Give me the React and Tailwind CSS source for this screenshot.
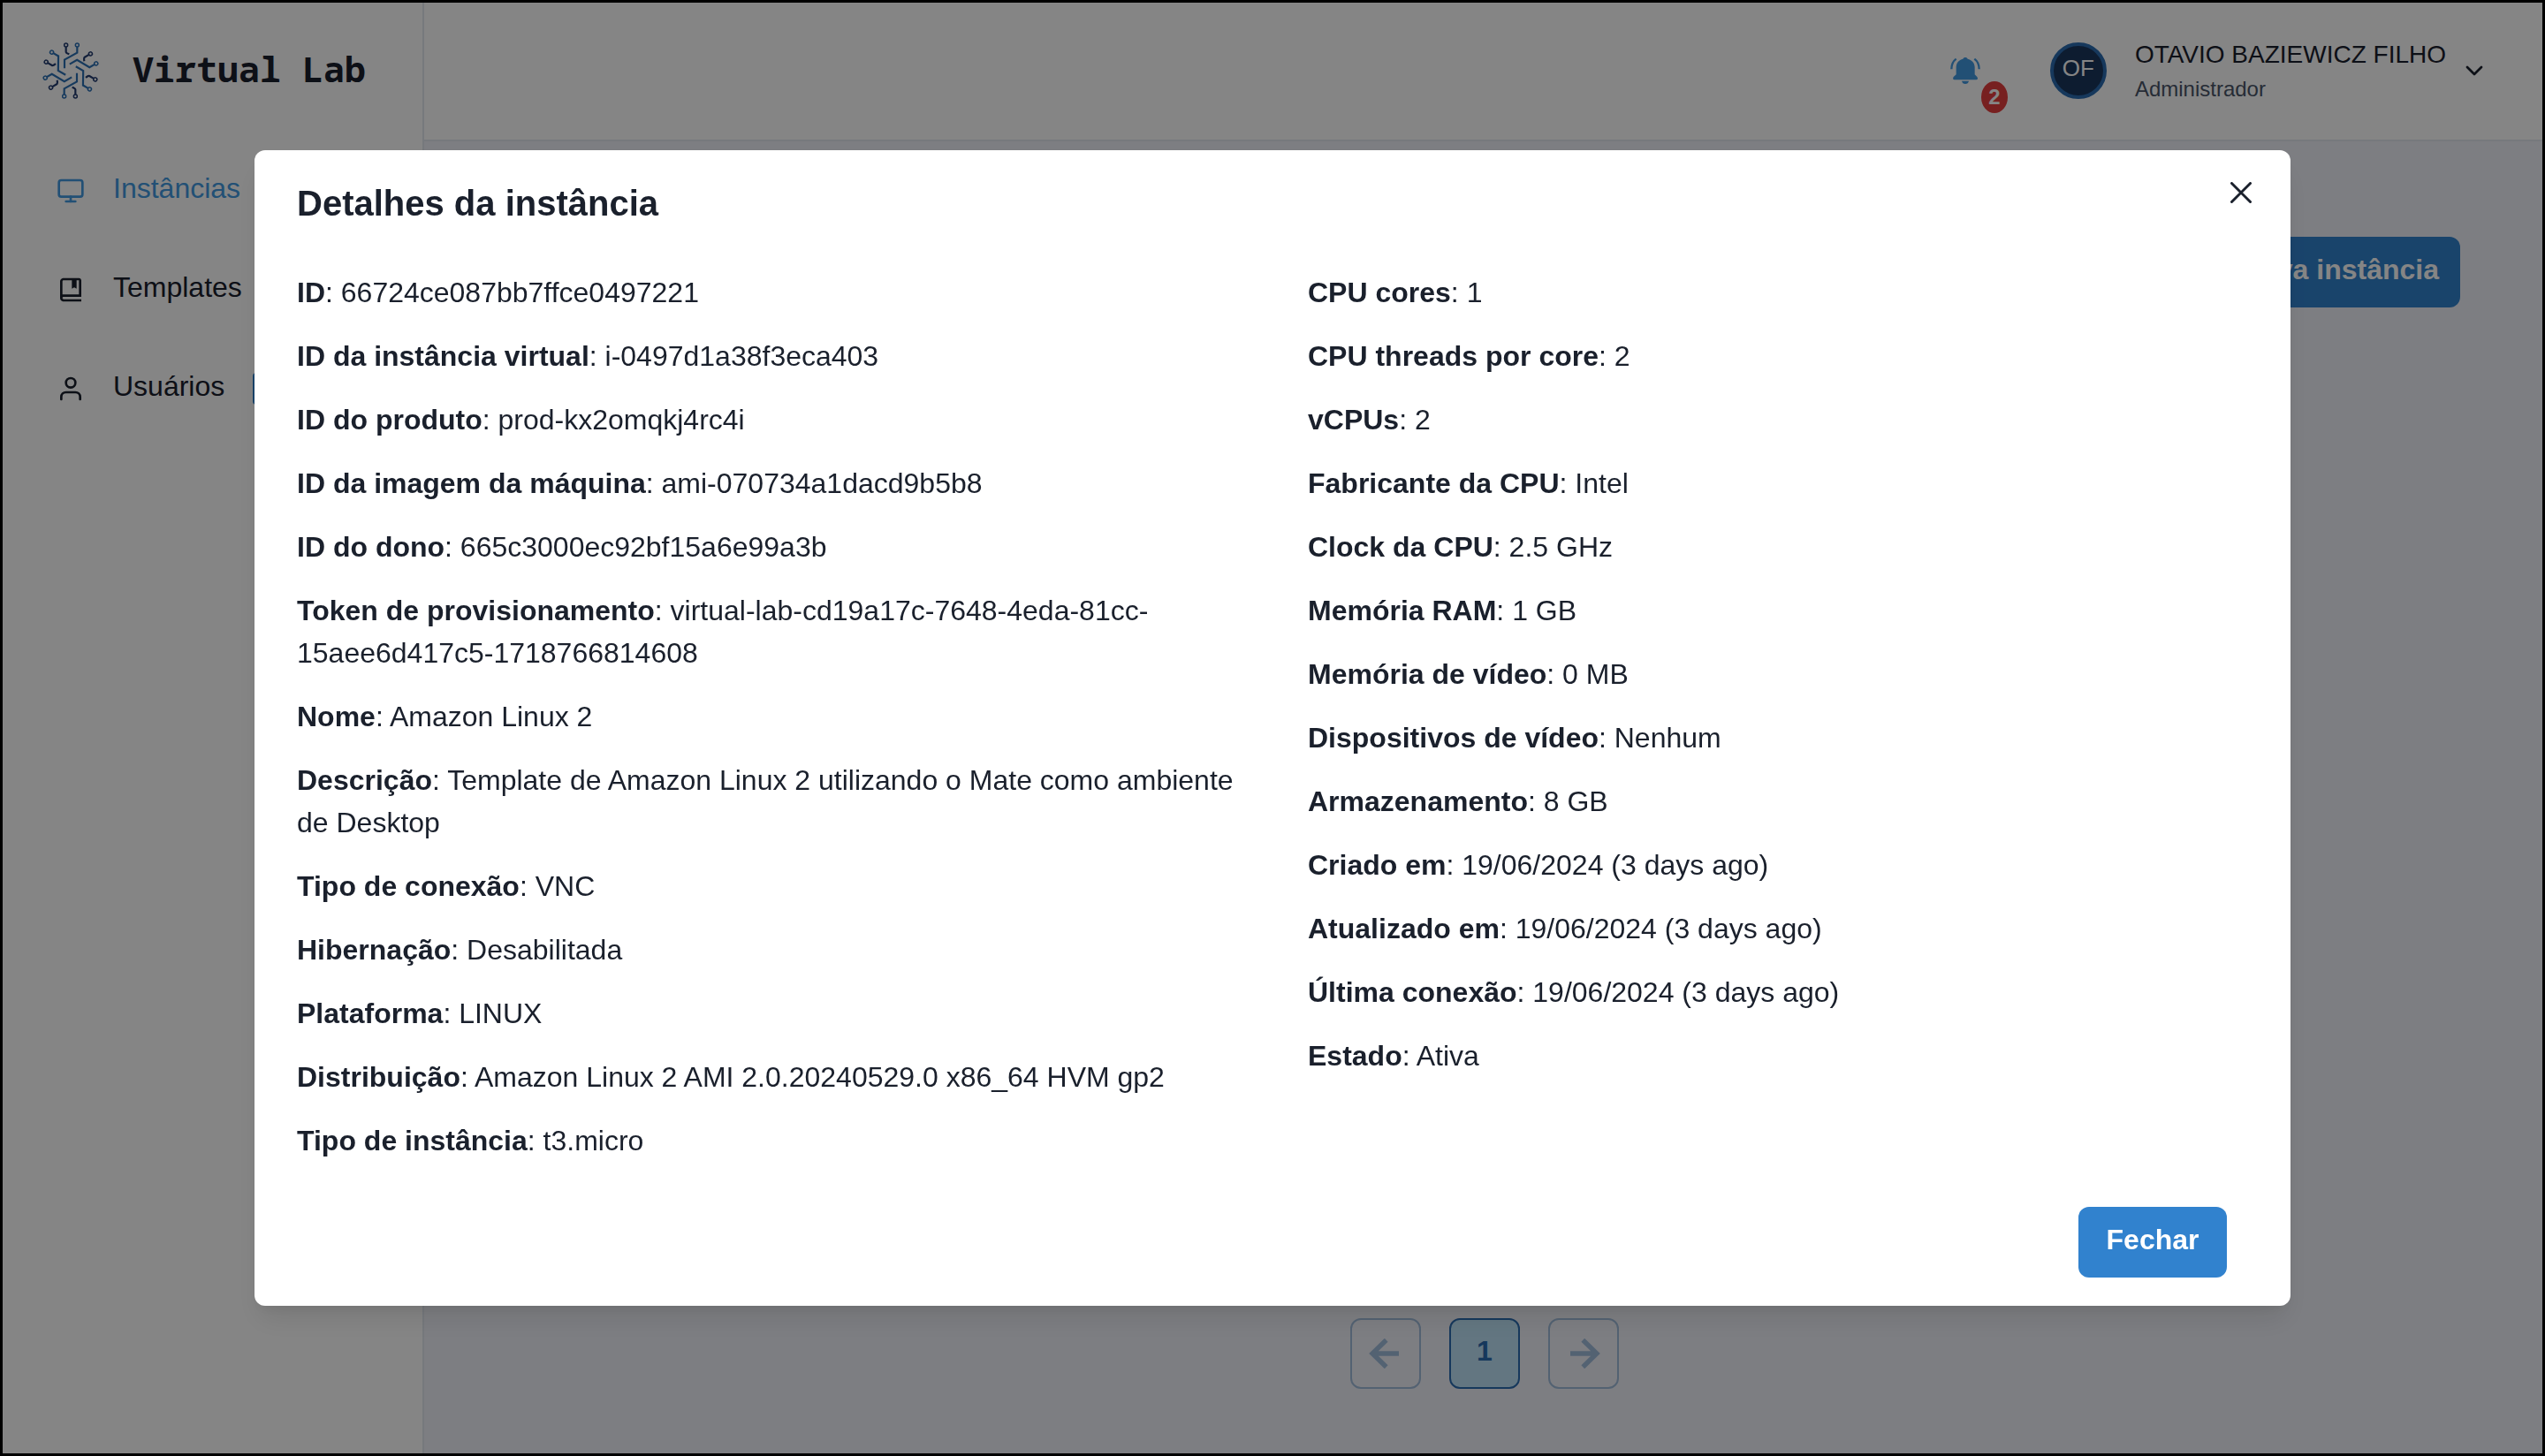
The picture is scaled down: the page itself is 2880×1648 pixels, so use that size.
import { FiChevronDown, FiMonitor, FiUser } from "react-icons/fi";
import { BiBookBookmark } from "react-icons/bi";

const leftDetails = [
  ["ID", "66724ce087bb7ffce0497221"],
  ["ID da instância virtual", "i-0497d1a38f3eca403"],
  ["ID do produto", "prod-kx2omqkj4rc4i"],
  ["ID da imagem da máquina", "ami-070734a1dacd9b5b8"],
  ["ID do dono", "665c3000ec92bf15a6e99a3b"],
  ["Token de provisionamento", "virtual-lab-cd19a17c-7648-4eda-81cc-15aee6d417c5-1718766814608"],
  ["Nome", "Amazon Linux 2"],
  ["Descrição", "Template de Amazon Linux 2 utilizando o Mate como ambiente de Desktop"],
  ["Tipo de conexão", "VNC"],
  ["Hibernação", "Desabilitada"],
  ["Plataforma", "LINUX"],
  ["Distribuição", "Amazon Linux 2 AMI 2.0.20240529.0 x86_64 HVM gp2"],
  ["Tipo de instância", "t3.micro"],
];

const rightDetails = [
  ["CPU cores", "1"],
  ["CPU threads por core", "2"],
  ["vCPUs", "2"],
  ["Fabricante da CPU", "Intel"],
  ["Clock da CPU", "2.5 GHz"],
  ["Memória RAM", "1 GB"],
  ["Memória de vídeo", "0 MB"],
  ["Dispositivos de vídeo", "Nenhum"],
  ["Armazenamento", "8 GB"],
  ["Criado em", "19/06/2024 (3 days ago)"],
  ["Atualizado em", "19/06/2024 (3 days ago)"],
  ["Última conexão", "19/06/2024 (3 days ago)"],
  ["Estado", "Ativa"],
];

function Logo() {
  return (
    <svg viewBox="-96 -96 192 192" className="size-16 shrink-0" fill="none" aria-hidden="true">
      {[0, 60, 120, 180, 240, 300].map((angle) => (
        <g key={angle} transform={`rotate(${angle})`}>
          <g stroke="#2b6fb3" strokeWidth="6.5">
            <circle cx="22" cy="-87" r="6" strokeWidth="4.5" />
            <path d="M22 -81V-61L-21 -37V-8" />
          </g>
          <g stroke="#233c70" strokeWidth="6.5">
            <circle cx="-16" cy="-87" r="6" strokeWidth="4.5" />
            <path d="M-16 -81V-64Q-16 -60 -5 -56" />
          </g>
        </g>
      ))}
    </svg>
  );
}

function BellIcon() {
  return (
    <svg viewBox="0 0 102 90" className="h-[30px] w-[34px]" aria-hidden="true">
      <g fill="currentColor">
        <path d="M51 0C55 0 58 2 59 5C73 8 83 19 83 33V58L91 66C95 71 93 76 88 76H14C9 76 8 71 11 66L20 58V33C20 19 29 8 43 5C44 2 47 0 51 0Z" />
        <path d="M39 80H63C62 86 57 90 51 90S40 86 39 80Z" />
      </g>
      <path d="M20 5Q4 17 4 40M82 5Q98 17 98 40" fill="none" stroke="currentColor" strokeWidth="7" />
    </svg>
  );
}

function ArrowIcon({ flipped }) {
  return (
    <svg viewBox="0 0 100 100" className={flipped ? "ml-1 size-[34px] rotate-180" : "mr-1 size-[34px]"} fill="none" stroke="currentColor" strokeWidth="16" aria-hidden="true">
      <path d="M100 50H14M58 5L12 50L58 95" />
    </svg>
  );
}

function DetailList({ items }) {
  return (
    <div className="flex flex-col gap-6">
      {items.map(([label, value]) => (
        <p key={label}>
          <strong className="font-bold">{label}</strong>: {value}
        </p>
      ))}
    </div>
  );
}

function Sidebar() {
  const link = "flex h-28 items-center gap-8 px-16";
  return (
    <aside className="w-[480px] shrink-0 border-r-2 border-[#e2e8f0] bg-white">
      <div className="flex h-40 items-center gap-[38px] px-12">
        <Logo />
        <span className="pb-1 font-['Noto_Sans_Mono','DejaVu_Sans_Mono',monospace] text-[40px] font-bold whitespace-nowrap">
          Virtual Lab
        </span>
      </div>
      <nav className="flex flex-col">
        <a href="#instancias" className={`${link} text-[#4299e1]`}>
          <FiMonitor className="size-8" />
          <span className="pb-1.5">Instâncias</span>
        </a>
        <a href="#templates" className={link}>
          <BiBookBookmark className="size-8" />
          <span className="pb-1.5">Templates</span>
        </a>
        <a href="#usuarios" className={link}>
          <FiUser className="size-8" />
          <span className="pb-1.5">Usuários</span>
          <span className="h-9 w-24 rounded bg-[#3182ce]" />
        </a>
      </nav>
    </aside>
  );
}

function Header() {
  return (
    <header className="flex h-40 items-center justify-end border-b-2 border-[#e2e8f0] bg-white pt-0.5 pr-16">
      <button type="button" aria-label="Notificações" className="relative mr-12 flex size-24 items-center justify-center text-[#4299e1]">
        <BellIcon />
        <span className="absolute right-0 bottom-0 flex h-9 w-[30px] items-center justify-center rounded-[50%] bg-[#e53e3e] text-2xl font-bold text-white">
          2
        </span>
      </button>
      <button type="button" className="flex items-center text-left">
        <span className="flex size-16 items-center justify-center rounded-full border-4 border-[#2b6cb0] bg-[#1a365d] text-[26px] leading-8 text-white">
          <span className="pb-1.5">OF</span>
        </span>
        <span className="mr-4 ml-8 flex flex-col">
          <span className="text-[28px] leading-[42px]">OTAVIO BAZIEWICZ FILHO</span>
          <span className="text-2xl leading-9 text-[#4a5568]">Administrador</span>
        </span>
        <FiChevronDown className="size-8" />
      </button>
    </header>
  );
}

function Pagination() {
  const box = "flex size-20 items-center justify-center rounded-xl border-2 border-[#2b6cb0] text-[#2b6cb0]";
  return (
    <nav aria-label="Paginação" className="flex justify-center gap-8">
      <button type="button" disabled aria-label="Página anterior" className={`${box} opacity-40`}>
        <ArrowIcon />
      </button>
      <button type="button" aria-current="page" className={`${box} bg-[#bee3f8] pb-1.5 font-bold`}>
        1
      </button>
      <button type="button" disabled aria-label="Próxima página" className={`${box} opacity-40`}>
        <ArrowIcon flipped />
      </button>
    </nav>
  );
}

function DetailsModal() {
  return (
    <div className="fixed inset-0 flex items-center justify-center bg-black/48">
      <section
        role="dialog"
        aria-modal="true"
        aria-labelledby="modal-title"
        className="relative w-4/5 rounded-xl bg-white shadow-[0_20px_30px_-6px_rgba(0,0,0,0.1),0_8px_12px_-4px_rgba(0,0,0,0.05)]"
      >
        <h2 id="modal-title" className="px-12 pt-[30px] pb-[34px] text-[40px] leading-[60px] font-bold">
          Detalhes da instância
        </h2>
        <button type="button" aria-label="Fechar janela" className="absolute top-4 right-6 flex size-16 items-center justify-center">
          <svg viewBox="0 0 24 24" className="size-6" stroke="currentColor" strokeWidth="3" strokeLinecap="round" aria-hidden="true">
            <path d="M1.5 1.5L22.5 22.5M22.5 1.5L1.5 22.5" />
          </svg>
        </button>
        <div className="grid grid-cols-2 gap-20 px-12 pt-[13px] pb-[19px]">
          <DetailList items={leftDetails} />
          <DetailList items={rightDetails} />
        </div>
        <footer className="flex justify-end py-8 pr-[72px]">
          <button type="button" className="h-20 w-[168px] rounded-xl bg-[#3182ce] pb-1.5 font-bold text-white">
            Fechar
          </button>
        </footer>
      </section>
    </div>
  );
}

export default function App() {
  return (
    <div className="flex min-h-screen bg-[#f0f2f9] font-['Liberation_Sans',Arial,sans-serif] text-[32px] leading-[48px] text-[#1a202c]">
      <Sidebar />
      <div className="flex grow flex-col">
        <Header />
        <main className="flex grow flex-col justify-between px-24 pt-[108px] pb-[76px]">
          <button type="button" className="h-20 self-end rounded-xl bg-[#3182ce] px-6 pb-1.5 font-bold text-white">
            Nova instância
          </button>
          <Pagination />
        </main>
      </div>
      <DetailsModal />
      <div className="pointer-events-none fixed inset-0 border-3 border-black" />
    </div>
  );
}
